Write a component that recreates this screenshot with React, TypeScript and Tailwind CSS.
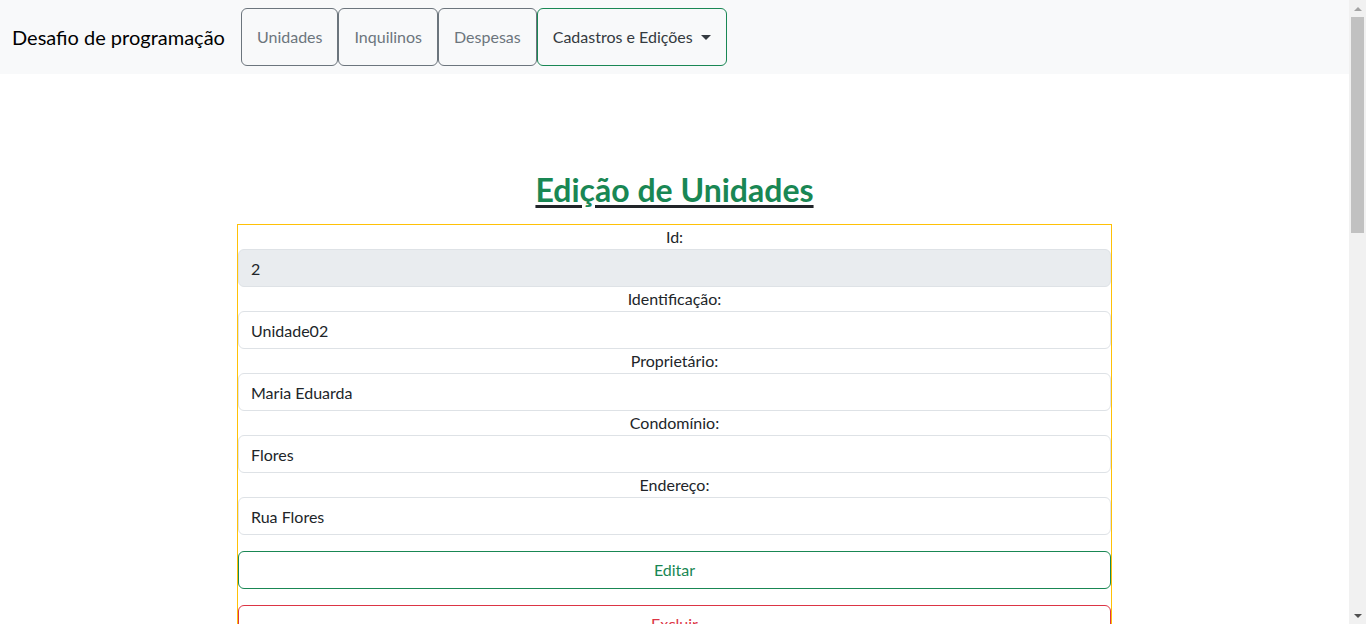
const font = { fontFamily: "Lato, 'Noto Sans', sans-serif" };

function NavButton({ label, green, caret }: { label: string; green?: boolean; caret?: boolean }) {
  return (
    <button
      className={
        "h-[58px] px-[15px] rounded-md border text-base flex items-center " +
        (green ? "border-[#198754] text-[#343a40]" : "border-[#6c757d] text-[#6c757d]")
      }
    >
      {label}
      {caret && (
        <span className="inline-block w-0 h-0 border-l-[5px] border-r-[5px] border-t-[5px] border-l-transparent border-r-transparent border-t-[#343a40] ml-2" />
      )}
    </button>
  );
}

function Field({ label, value, disabled }: { label: string; value: string; disabled?: boolean }) {
  return (
    <div className="flex flex-col">
      <label className="h-6 leading-6 text-center text-base text-[#212529]">{label}</label>
      <input
        readOnly
        value={value}
        className={
          "h-[38px] px-3 rounded-md border border-[#dee2e6] text-base text-[#212529] outline-none " +
          (disabled ? "bg-[#e9ecef]" : "bg-white")
        }
        style={font}
      />
    </div>
  );
}

function Scrollbar() {
  return (
    <div className="w-[17px] shrink-0 h-full bg-[#f1f1f1] flex flex-col items-center">
      <div className="h-[17px] flex items-center justify-center">
        <span className="w-0 h-0 border-l-4 border-r-4 border-b-4 border-l-transparent border-r-transparent border-b-[#a3a3a3]" />
      </div>
      <div className="w-[13px] h-[216px] bg-[#c1c1c1]" />
      <div className="flex-1" />
      <div className="h-[17px] flex items-center justify-center">
        <span className="w-0 h-0 border-l-4 border-r-4 border-t-4 border-l-transparent border-r-transparent border-t-[#505050]" />
      </div>
    </div>
  );
}

export default function App() {
  return (
    <div className="h-screen flex overflow-hidden bg-white text-[#212529]" style={font}>
      <main className="flex-1 min-w-0">
        {/* Navbar */}
        <nav className="h-[74px] bg-[#f8f9fa] flex items-center px-3">
          <span className="text-xl text-black mr-4">Desafio de programação</span>
          <div className="flex">
            <NavButton label="Unidades" />
            <NavButton label="Inquilinos" />
            <NavButton label="Despesas" />
            <NavButton label="Cadastros e Edições" green caret />
          </div>
        </nav>

        {/* Title */}
        <h1 className="mt-[97px] mb-[15px] text-center text-[32px] leading-[38px] font-bold">
          <span className="text-[#198754] underline decoration-[#212529] decoration-[3px] underline-offset-[3px]">
            Edição de Unidades
          </span>
        </h1>

        {/* Form */}
        <form className="w-[875px] mx-auto border border-[#ffc107] flex flex-col">
          <Field label="Id:" value="2" disabled />
          <Field label="Identificação:" value="Unidade02" />
          <Field label="Proprietário:" value="Maria Eduarda" />
          <Field label="Condomínio:" value="Flores" />
          <Field label="Endereço:" value="Rua Flores" />
          <button
            type="button"
            className="mt-4 h-[38px] rounded-md border border-[#198754] text-[#198754] text-base"
          >
            Editar
          </button>
          <button
            type="button"
            className="mt-4 h-[38px] rounded-md border border-[#dc3545] text-[#dc3545] text-base"
          >
            Excluir
          </button>
        </form>
      </main>
      <Scrollbar />
    </div>
  );
}
